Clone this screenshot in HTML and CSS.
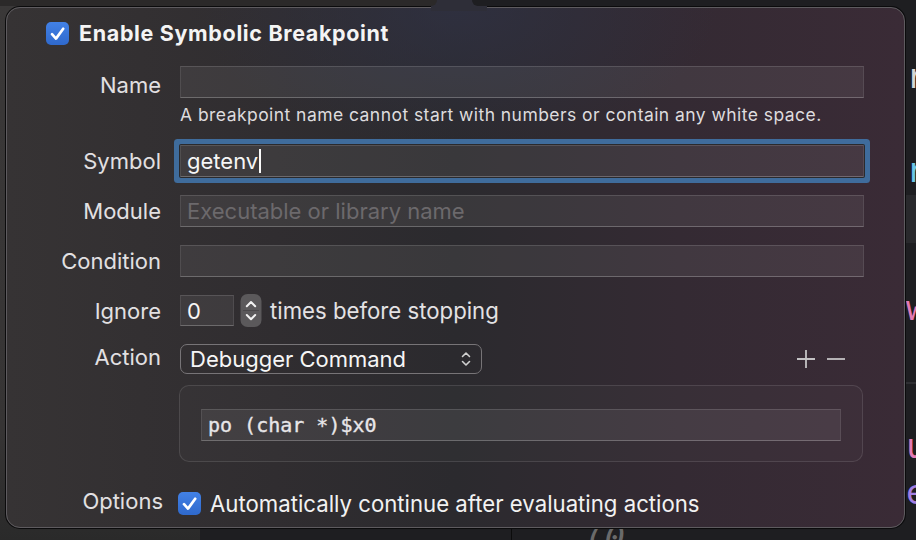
FILE: index.html
```html
<!DOCTYPE html>
<html>
<head>
<meta charset="utf-8">
<link rel="stylesheet" href="styles.css">
</head>
<body>
<div class="backdrop">
  <div class="bd-left"></div>
  <div class="bd-top-left"></div>
  <div class="bd-top-right"></div>
  <div class="bd-gutter"></div>
  <div class="bd-band"></div>
  <div class="bd-rule"></div>
  <div class="code-clip">
    <span class="code c1">r</span>
    <span class="code c2">r</span>
    <span class="code c3">w</span>
    <span class="code c4">u</span>
    <span class="code c5">e</span>
  </div>
  <span class="code c6">(0</span>
</div>
<div class="stage">
  <div class="popover">
    <div class="header">
      <span class="checkbox"><svg viewBox="0 0 23 23" width="23" height="23"><path d="M6 12.2 L10 16.6 L17.2 6.8" fill="none" stroke="#fff" stroke-width="2.7" stroke-linecap="round" stroke-linejoin="round"/></svg></span>
      <span class="title">Enable Symbolic Breakpoint</span>
    </div>
    <div class="form">
      <div class="row r-name">
        <label class="label name-label">Name</label>
        <div class="field"></div>
      </div>
      <div class="row r-hint">
        <span></span>
        <div class="hint">A breakpoint name cannot start with numbers or contain any white space.</div>
      </div>
      <div class="row r-symbol">
        <label class="label">Symbol</label>
        <div class="field focused"><span class="value">getenv</span><span class="caret"></span></div>
      </div>
      <div class="row r-gap">
        <label class="label">Module</label>
        <div class="field"><span class="placeholder">Executable or library name</span></div>
      </div>
      <div class="row r-gap">
        <label class="label">Condition</label>
        <div class="field"></div>
      </div>
      <div class="row r-ignore">
        <label class="label">Ignore</label>
        <div class="inline">
          <div class="field small"><span class="value">0</span></div>
          <span class="stepper"><svg viewBox="0 0 22 33" width="22" height="33"><rect x="0.5" y="0" width="21" height="33" rx="7" fill="#5b595b"/><path d="M6.8 12.2 L11 8 L15.2 12.2" fill="none" stroke="#f2f2f2" stroke-width="2" stroke-linecap="round" stroke-linejoin="round"/><path d="M6.8 21 L11 25.2 L15.2 21" fill="none" stroke="#f2f2f2" stroke-width="2" stroke-linecap="round" stroke-linejoin="round"/><path d="M3 16.5 H19" stroke="#4a484a" stroke-width="1"/></svg></span>
          <span class="text">times before stopping</span>
        </div>
      </div>
      <div class="row r-action">
        <label class="label action-label">Action</label>
        <div class="action-line">
          <div class="popup"><span class="value">Debugger Command</span><svg class="updown" viewBox="0 0 12 18" width="12" height="18"><path d="M2.5 6.5 L6 3 L9.5 6.5" fill="none" stroke="#d0d0d0" stroke-width="1.6" stroke-linecap="round" stroke-linejoin="round"/><path d="M2.5 11.5 L6 15 L9.5 11.5" fill="none" stroke="#d0d0d0" stroke-width="1.6" stroke-linecap="round" stroke-linejoin="round"/></svg></div>
          <div class="plusminus">
            <svg viewBox="0 0 20 20" width="20" height="20"><path d="M10 1 V19 M1 10 H19" stroke="#c4c2c4" stroke-width="1.8"/></svg>
            <svg viewBox="0 0 20 20" width="20" height="20"><path d="M1 10 H19" stroke="#c4c2c4" stroke-width="1.8"/></svg>
          </div>
        </div>
      </div>
      <div class="row r-box">
        <span></span>
        <div class="action-box">
          <div class="field cmd"><span class="mono">po (char *)$x0</span></div>
        </div>
      </div>
      <div class="row r-options">
        <label class="label opt-label">Options</label>
        <div class="inline">
          <span class="checkbox small-left"><svg viewBox="0 0 23 23" width="23" height="23"><path d="M6 12.2 L10 16.6 L17.2 6.8" fill="none" stroke="#fff" stroke-width="2.7" stroke-linecap="round" stroke-linejoin="round"/></svg></span>
          <span class="text opt">Automatically continue after evaluating actions</span>
        </div>
      </div>
    </div>
  </div>
</div>
</body>
</html>
```
FILE: styles.css
```css
html, body {
  margin: 0;
  padding: 0;
}
body {
  width: 916px;
  height: 540px;
  overflow: hidden;
  position: relative;
  background: #1e1e21;
  font-family: Inter, "Noto Sans", sans-serif;
  color: #e4e2e4;
}

/* backdrop (windows behind the popover) */
.backdrop {
  position: absolute;
  inset: 0;
}
.bd-left {
  position: absolute;
  left: 0; top: 0;
  width: 200px; height: 540px;
  background: linear-gradient(180deg, #3a3838 0%, #363434 80%, #2a2a2a 100%);
}
.bd-top-left {
  position: absolute;
  left: 0; top: 0;
  width: 437px; height: 6px;
  background: #2b2929;
  border-bottom-right-radius: 9px;
  z-index: 3;
}
.bd-top-right {
  position: absolute;
  left: 472px; top: 0;
  width: 444px; height: 6px;
  background: #1e1e21;
  border-bottom-left-radius: 9px;
  z-index: 3;
}
.bd-gutter {
  position: absolute;
  left: 511px; top: 0;
  width: 1px; height: 540px;
  background: #0c0c0c;
  z-index: 1;
}
.bd-band {
  position: absolute;
  left: 906px; top: 195px;
  width: 10px; height: 48px;
  background: #29292c;
}
.bd-rule {
  position: absolute;
  left: 906px; top: 382px;
  width: 10px; height: 2px;
  background: #2f2f33;
}
.code-clip {
  position: absolute;
  left: 906px; top: 0;
  width: 10px; height: 540px;
  overflow: hidden;
}
.code {
  position: absolute;
  font-family: "DejaVu Sans Mono", monospace;
  font-size: 34px;
  line-height: 36px;
  left: 0;
}
.c1 { top: 58px; color: #d6d6d6; }
.c2 { top: 152px; color: #6ec6e6; }
.c3 { top: 290px; color: #e27ab4; }
.c4 { top: 428px; color: #e27ab4; }
.c5 { top: 474px; color: #a27fe2; }
.c6 { top: 520px; left: 584px; color: #6a6a6a; font-style: italic; }

/* popover */
.stage {
  position: relative;
  z-index: 2;
  padding: 7px 0 0 6px;
}
.popover {
  position: relative;
  box-sizing: border-box;
  width: 899px;
  height: 521px;
  border: 1px solid #5e5b5f;
  border-radius: 14px;
  box-shadow: 0 0 0 1px #0b0b0c;
  background:
    radial-gradient(ellipse 260px 140px at 450px 0px, rgba(48, 50, 70, 0.7), rgba(48, 50, 70, 0) 100%),
    linear-gradient(90deg, #363334 0%, #302d30 30%, #2b2a2e 50%, #342a33 75%, #3a2b36 100%);
  padding: 14px 0 0 0;
}
.popover::before {
  content: "";
  position: absolute;
  left: 424px;
  top: -9px;
  width: 56px;
  height: 12px;
  background: #2e2e38;
}

.header {
  display: flex;
  align-items: center;
  gap: 10px;
  padding-left: 39px;
  height: 23px;
}
.checkbox {
  display: inline-block;
  width: 23px;
  height: 23px;
  border-radius: 5px;
  background: linear-gradient(180deg, #4281e6 0%, #2f69cc 100%);
  flex: none;
}
.checkbox svg { display: block; }
.title {
  font-weight: 700;
  font-size: 21.5px;
  letter-spacing: 0.65px;
  color: #f4f4f4;
  line-height: 23px;
}

.form {
  padding-right: 40px;
}
.row {
  display: grid;
  grid-template-columns: 154px 1fr;
  column-gap: 19px;
  align-items: center;
}
.label {
  text-align: right;
  font-size: 22px;
  color: #e2e0e2;
  line-height: 26px;
}
.name-label { padding-top: 5px; }
.action-label { padding-bottom: 4px; }
.opt-label { margin-right: -2px; padding-bottom: 5px; }
.r-name { margin-top: 21px; }
.r-hint { margin-top: 6px; }
.r-symbol { margin-top: 20px; }
.r-gap { margin-top: 18px; }
.r-ignore { margin-top: 17px; }
.r-action { margin-top: 17px; }
.r-box { margin-top: 11px; }
.r-options { margin-top: 26px; }

.field {
  box-sizing: border-box;
  height: 32px;
  background: rgba(255, 255, 255, 0.065);
  border: 1px solid rgba(255, 255, 255, 0.09);
  border-top-color: rgba(255, 255, 255, 0.13);
  border-bottom-color: rgba(255, 255, 255, 0.24);
  display: flex;
  align-items: center;
  padding-left: 6px;
  font-size: 22px;
}
.field.focused {
  border-radius: 1px;
  box-shadow: 0 0 0 1px #2a2a2d, 0 0 0 6px #3f6c9c;
}
.value { color: #f6f6f6; }
.caret {
  display: inline-block;
  width: 2px;
  height: 24px;
  background: #fafafa;
  margin-left: 1px;
}
.placeholder { color: #6c696c; }
.hint {
  font-size: 17.5px;
  line-height: 21px;
  color: #dedcde;
  letter-spacing: 0.45px;
}

.inline {
  display: flex;
  align-items: center;
}
.field.small {
  width: 54px;
  height: 31px;
}
.stepper {
  margin-left: 6px;
  display: block;
  height: 33px;
}
.stepper svg { display: block; }
.text {
  margin-left: 8px;
  font-size: 22.2px;
  color: #e4e2e4;
}
.text.opt { margin-left: 9px; color: #f2f2f2; }
.small-left { margin-left: -2px; }

.action-line {
  display: flex;
  align-items: center;
  justify-content: space-between;
}
.popup {
  box-sizing: border-box;
  width: 302px;
  height: 30px;
  border: 1.5px solid #777477;
  border-radius: 7px;
  display: flex;
  align-items: center;
  justify-content: space-between;
  padding: 0 9px 0 9px;
  font-size: 22px;
}
.updown { display: block; }
.plusminus {
  display: flex;
  gap: 10px;
  margin-right: 18px;
}
.plusminus svg { display: block; }

.action-box {
  box-sizing: border-box;
  height: 77px;
  border: 1px solid rgba(255, 255, 255, 0.11);
  border-radius: 10px;
  background: rgba(255, 255, 255, 0.025);
  padding: 23px 21px 0 21px;
  margin-left: -1px;
  margin-right: 1px;
}
.field.cmd {
  height: 32px;
  padding-left: 6px;
}
.mono {
  font-family: "DejaVu Sans Mono", "Liberation Mono", monospace;
  font-size: 20px;
  color: #e8e6e8;
  -webkit-text-stroke: 0.35px #e8e6e8;
}
```
